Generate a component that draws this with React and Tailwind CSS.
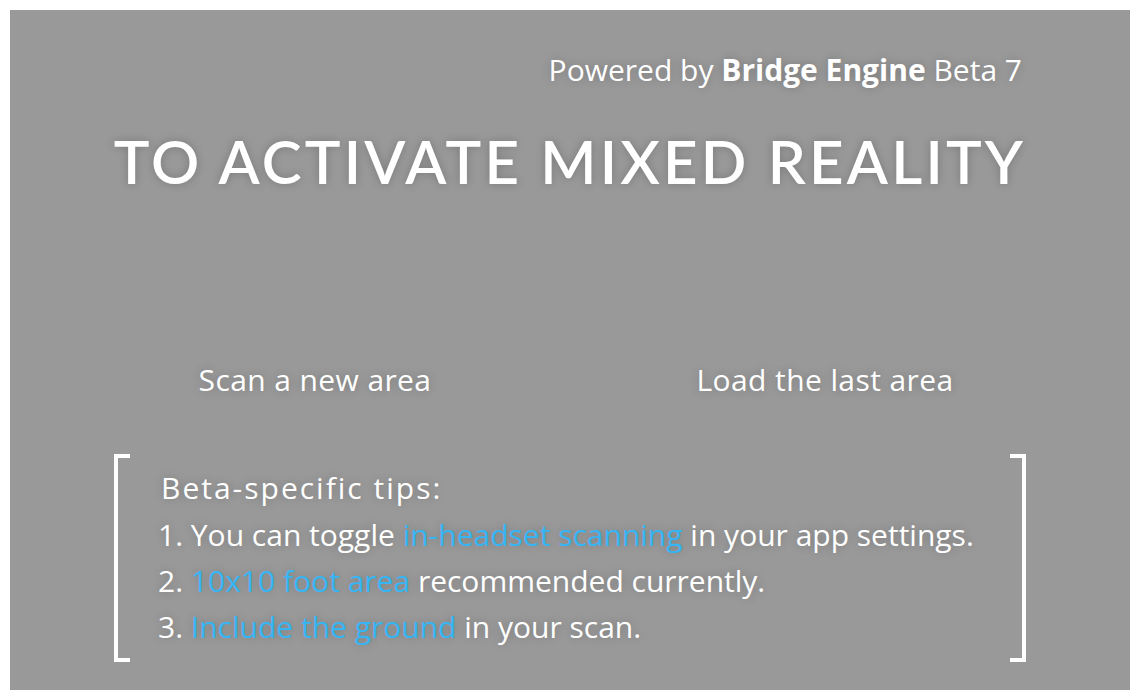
import React from 'react';

const shadow = '[text-shadow:0_0_10px_rgba(0,0,0,0.22)]';

const Tip = ({ n, pre, hl, rest }) => (
    <div className="h-[46px] leading-[46px]">
        {n}. {pre}<span className="text-[#36b5f5]">{hl}</span> {rest}
    </div>
);

export default function App() {
    return (
        <div className="w-[1140px] h-[700px] bg-white p-[10px] font-['Open_Sans',sans-serif]">
            <div className={`h-full bg-[#999999] flex flex-col text-white ${shadow}`}>
                <div className="pt-[44px] pr-[108px] text-right text-[30px] leading-[32px]">
                    Powered by <span className="font-bold">Bridge Engine</span> Beta 7
                </div>

                <h1 className="mt-[39px] text-center font-['Lato',sans-serif] text-[60px] leading-[72px] font-semibold tracking-[3.2px]">
                    TO ACTIVATE MIXED REALITY
                </h1>

                <div className="mt-[165px] mx-auto w-[1020px] flex text-[30px] leading-[36px] tracking-[0.4px]">
                    <div className="flex-1 text-center">Scan a new area</div>
                    <div className="flex-1 text-center">Load the last area</div>
                </div>

                <div className="mt-[56px] ml-[104px] w-[912px] h-[208px] flex">
                    <div className="w-[16px] border-l-4 border-t-4 border-b-4 border-white" />
                    <div className="flex-1 pt-[18px] pl-[28px]">
                        <div className="pl-[3px] text-[30px] leading-[32px] tracking-[2px]">Beta-specific tips:</div>
                        <div className="mt-[8px] text-[30px]">
                            <Tip n="1" pre="You can toggle " hl="in-headset scanning" rest="in your app settings." />
                            <Tip n="2" pre="" hl="10x10 foot area" rest="recommended currently." />
                            <Tip n="3" pre="" hl="Include the ground" rest="in your scan." />
                        </div>
                    </div>
                    <div className="w-[16px] border-r-4 border-t-4 border-b-4 border-white" />
                </div>
            </div>
        </div>
    );
}
